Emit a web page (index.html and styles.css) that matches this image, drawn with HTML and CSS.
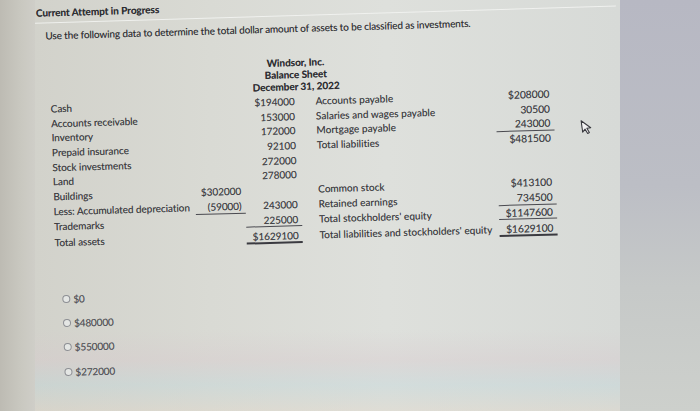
FILE: index.html
```html
<!DOCTYPE html>
<html lang="en">
<head>
<meta charset="utf-8">
<title>Current Attempt in Progress</title>
<link rel="stylesheet" href="styles.css">
</head>
<body>
<div class="screen">
  <div class="edge-left"></div>
  <div class="panel">
    <div class="content">
      <div class="title">Current Attempt in Progress</div>
      <div class="rule"></div>
      <p class="question">Use the following data to determine the total dollar amount of assets to be classified as investments.</p>

      <div class="sheet">
        <div class="heading">
          <div>Windsor, Inc.</div>
          <div>Balance Sheet</div>
          <div>December 31, 2022</div>
        </div>
        <div class="grid">
          <div class="lbl">Cash</div><div class="num"></div><div class="num">$194000</div><div class="lbl2">Accounts payable</div><div class="num r">$208000</div>
          <div class="lbl">Accounts receivable</div><div class="num"></div><div class="num">153000</div><div class="lbl2">Salaries and wages payable</div><div class="num r">30500</div>
          <div class="lbl">Inventory</div><div class="num"></div><div class="num">172000</div><div class="lbl2">Mortgage payable</div><div class="num r ul">243000</div>
          <div class="lbl">Prepaid insurance</div><div class="num"></div><div class="num">92100</div><div class="lbl2">Total liabilities</div><div class="num r">$481500</div>
          <div class="lbl">Stock investments</div><div class="num"></div><div class="num">272000</div><div class="lbl2"></div><div class="num r"></div>
          <div class="lbl">Land</div><div class="num"></div><div class="num">278000</div><div class="lbl2"></div><div class="num r"></div>
          <div class="lbl">Buildings</div><div class="num">$302000</div><div class="num"></div><div class="lbl2">Common stock</div><div class="num r">$413100</div>
          <div class="lbl">Less: Accumulated depreciation</div><div class="num ul">(59000)</div><div class="num">243000</div><div class="lbl2">Retained earnings</div><div class="num r ul">734500</div>
          <div class="lbl">Trademarks</div><div class="num"></div><div class="num ul">225000</div><div class="lbl2">Total stockholders' equity</div><div class="num r ul">$1147600</div>
          <div class="lbl last">Total assets</div><div class="num last"></div><div class="num last dbl">$1629100</div><div class="lbl2 last">Total liabilities and stockholders' equity</div><div class="num r last dbl">$1629100</div>
        </div>
      </div>

      <ul class="options">
        <li><span class="radio"></span>$0</li>
        <li><span class="radio"></span>$480000</li>
        <li><span class="radio"></span>$550000</li>
        <li><span class="radio"></span>$272000</li>
      </ul>
    </div>
    <svg class="cursor" width="12" height="16" viewBox="0 0 12 16" aria-hidden="true">
      <path d="M1 1 L1 12.5 L3.8 9.9 L5.8 14.5 L7.6 13.7 L5.7 9.2 L9.6 9.2 Z" fill="#f2f2f2" stroke="#3a3a40" stroke-width="1.1" stroke-linejoin="round"/>
    </svg>
  </div>
  <div class="edge-right"></div>
</div>
</body>
</html>
```

FILE: styles.css
```css
html, body {
  margin: 0;
  padding: 0;
}
body {
  width: 700px;
  height: 411px;
  overflow: hidden;
  font-family: Lato, "Open Sans", "Liberation Sans", sans-serif;
  color: #3a3a3c;
  background: #c9c8c2;
}
.screen {
  display: flex;
  width: 700px;
  height: 411px;
  background:
    linear-gradient(180deg, #85838d 0, #9b9aa2 2px, rgba(155,154,162,0) 5px),
    linear-gradient(180deg, rgba(0,0,0,0) 404px, #e8e8ec 407px, #e2e2e6 411px);
}
.edge-left {
  width: 35px;
  flex: none;
  background: linear-gradient(90deg, #bdbbb3, #c9c8c0 60%, #cfcec8);
}
.edge-right {
  flex: 1;
  background: linear-gradient(180deg, #b7b8c3 0, #bcbec5 45%, #c6c9c8 70%, #cdd0cc 100%);
}
.panel {
  width: 585px;
  flex: none;
  position: relative;
  overflow: hidden;
  background:
    linear-gradient(180deg, rgba(0,0,0,0) 0, rgba(0,0,0,0) 330px, rgba(215,200,205,0.35) 360px, rgba(190,215,220,0.35) 385px, rgba(225,215,200,0.35) 411px),
    linear-gradient(90deg, #d2d2cb 0, #d9dad4 30%, #dee0dc 60%, #d7dad7 100%);
}
.content {
  transform: rotate(-1.7deg);
  transform-origin: 265px 150px;
  text-shadow: 0 0 0.6px rgba(40, 40, 46, 0.45);
}
.title {
  margin: 0;
  padding: 0 0 0 5px;
  font-weight: 700;
  font-size: 10px;
  line-height: 12px;
  letter-spacing: -0.05px;
  color: #2c2c30;
  position: relative;
  top: -1px;
}
.rule {
  margin: 3px 0 0 2px;
  height: 1px;
  background: #f2f3f1;
  opacity: 0.9;
}
.question {
  margin: 6px 0 0 14px;
  font-size: 10px;
  line-height: 12px;
  letter-spacing: -0.13px;
  color: #2f2f33;
}
.sheet {
  margin: 22px 0 0 17px;
  font-size: 10px;
  letter-spacing: -0.05px;
}
.heading {
  width: 200px;
  margin-left: 146px;
  text-align: center;
  font-weight: 700;
  line-height: 12px;
  color: #2c2c30;
}
.grid {
  margin-top: 2px;
  display: grid;
  grid-template-columns: 142px 50px 56px 197px 58px;
  grid-auto-rows: 14.7px;
  line-height: 14px;
}
.grid > div {
  box-sizing: border-box;
  white-space: nowrap;
}
.lbl {
  color: #3a3a3e;
}
.lbl2 {
  padding-left: 17px;
  letter-spacing: 0.04px;
  color: #3a3a3e;
}
.num {
  text-align: right;
  padding-right: 4px;
  color: #3e3e44;
}
.num.r {
  padding-right: 4px;
  font-size: 10.3px;
}
.ul {
  border-bottom: 1px solid #4a4a50;
}
.last {
  padding-top: 2px;
}
.grid > .last {
  height: 17px;
}
.dbl {
  border-bottom: 2px solid #3a3a40;
}
.options {
  list-style: none;
  margin: 45px 0 0 23px;
  padding: 0;
  font-size: 10px;
  letter-spacing: -0.15px;
  color: #55555a;
}
.options li {
  display: flex;
  align-items: center;
  gap: 3px;
  height: 12px;
  margin-bottom: 12.3px;
}
.radio {
  width: 6px;
  height: 6px;
  border: 1px solid #8d8f94;
  border-radius: 50%;
  background: #e4e6e4;
  flex: none;
}
.cursor {
  position: absolute;
  left: 546px;
  top: 119px;
  transform: rotate(-8deg);
}
```
